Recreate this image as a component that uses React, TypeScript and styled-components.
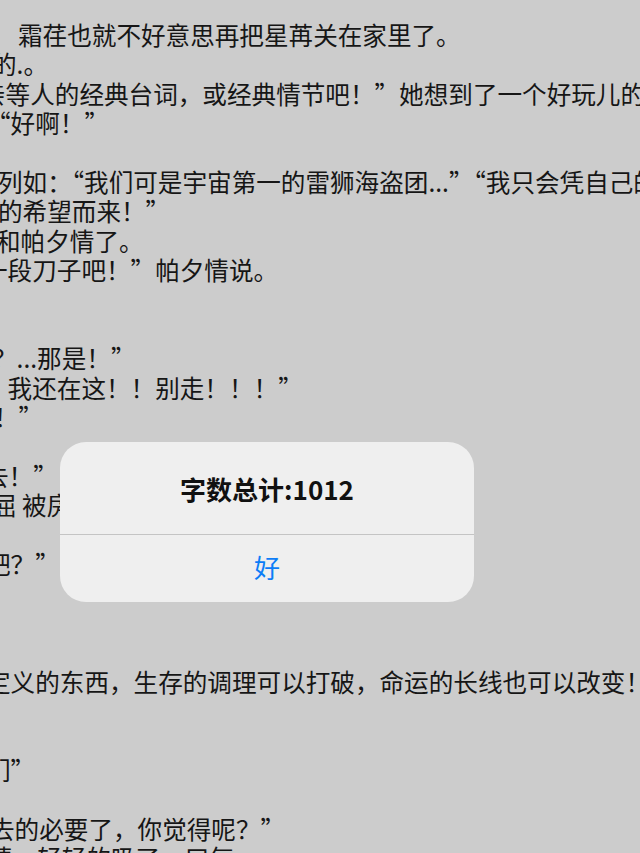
import styled, { createGlobalStyle } from "styled-components";

const GlobalStyle = createGlobalStyle`
  html, body {
    margin: 0;
    padding: 0;
    background: #cccccc;
  }
`;

type ReaderLine = { text: string; shift: number };

const lines: ReaderLine[] = [
  { text: "霜荏也就不好意思再把星苒关在家里了。", shift: 18 },
  { text: "的.。", shift: -8 },
  { text: "亲等人的经典台词，或经典情节吧！”她想到了一个好玩儿的事", shift: -19 },
  { text: "“好啊！”", shift: -14 },
  { text: "", shift: 0 },
  { text: "列如：“我们可是宇宙第一的雷狮海盗团...”“我只会凭自己的", shift: -2 },
  { text: "的希望而来！”", shift: -2 },
  { text: "和帕夕情了。", shift: -4 },
  { text: "一段刀子吧！”帕夕情说。", shift: -17 },
  { text: "", shift: 0 },
  { text: "", shift: 0 },
  { text: "？...那是！”", shift: -8 },
  { text: "！我还在这！！别走！！！”", shift: -17 },
  { text: "！”", shift: -6 },
  { text: "", shift: 0 },
  { text: "去！”", shift: -16 },
  { text: "屈 被房间", shift: -8 },
  { text: "", shift: 0 },
  { text: "吧？”", shift: -14 },
  { text: "", shift: 0 },
  { text: "", shift: 0 },
  { text: "", shift: 0 },
  { text: "定义的东西，生存的调理可以打破，命运的长线也可以改变！", shift: -14 },
  { text: "", shift: 0 },
  { text: "", shift: 0 },
  { text: "们”", shift: -14 },
  { text: "", shift: 0 },
  { text: "去的必要了，你觉得呢？”", shift: -10 },
  { text: "睛，轻轻的吸了一口气。", shift: -12 },
];

const App = () => {
  return (
    <Page>
      <GlobalStyle />
      <Reader>
        {lines.map((line, i) => (
          <Line key={i} $shift={line.shift}>
            {line.text}
          </Line>
        ))}
      </Reader>

      {/* word count alert */}
      <Alert>
        <AlertTitle>字数总计:1012</AlertTitle>
        <AlertButton>好</AlertButton>
      </Alert>
    </Page>
  );
};

export default App;

const Page = styled.div`
  position: relative;
  width: 640px;
  height: 853px;
  overflow: hidden;
  background-color: #cccccc;
  font-family: "Noto Sans CJK SC", "Noto Sans", sans-serif;
`;

const Reader = styled.div`
  display: flex;
  flex-direction: column;
  padding-top: 20px;
`;

const Line = styled.p<{ $shift: number }>`
  margin: 0;
  margin-left: ${({ $shift }) => $shift}px;
  height: 29.4px;
  line-height: 29.4px;
  font-size: 24.6px;
  color: #161616;
  white-space: nowrap;
`;

const Alert = styled.div`
  position: absolute;
  top: 442px;
  left: 60px;
  width: 414px;
  height: 160px;
  display: flex;
  flex-direction: column;
  background-color: #efefef;
  border-radius: 26px;
  overflow: hidden;
`;

const AlertTitle = styled.div`
  height: 92px;
  display: flex;
  align-items: center;
  justify-content: center;
  border-bottom: 1px solid #c4c4c4;
  font-size: 26px;
  font-weight: 700;
  color: #111111;
`;

const AlertButton = styled.button`
  flex: 1;
  border: none;
  background: transparent;
  font-family: inherit;
  font-size: 26px;
  color: #0d7df7;
  padding: 0 0 4px;
  cursor: pointer;
`;
